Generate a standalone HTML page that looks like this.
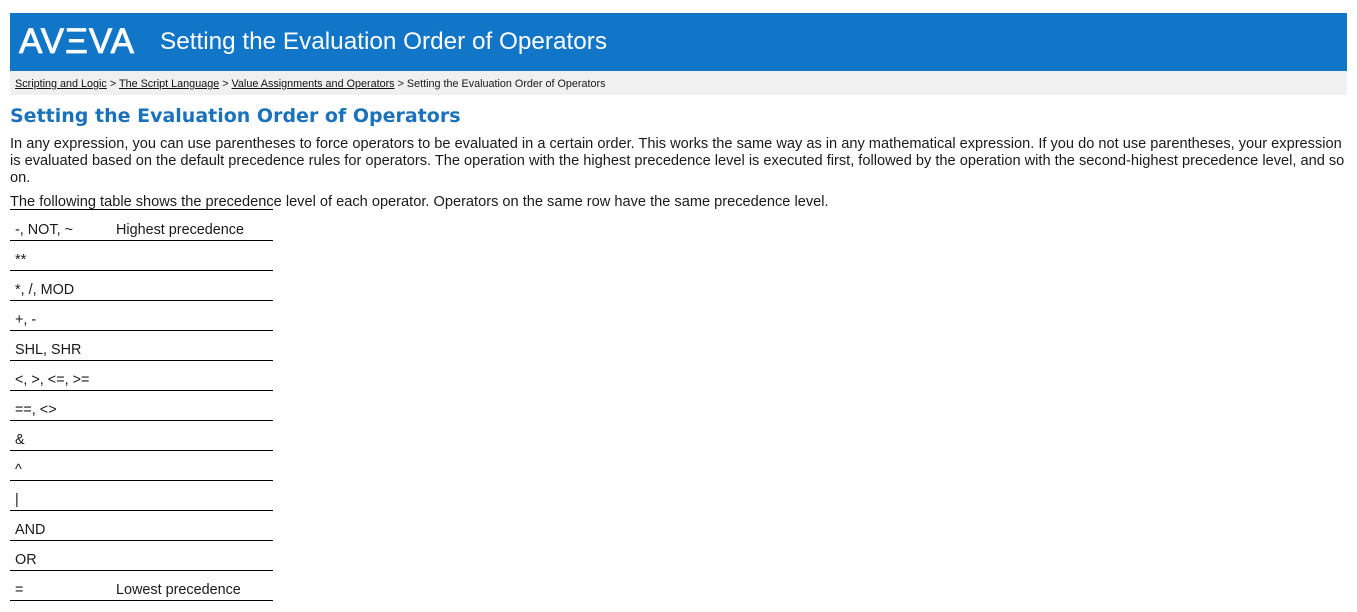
<!DOCTYPE html>
<html><head><meta charset="utf-8"><style>
body{margin:0;background:#fff;font-family:"Liberation Sans",Arial,sans-serif;color:#1a1a1a;}
.hdr{position:absolute;left:10px;top:13px;width:1337px;height:58px;background:#1176c8;color:#fff;}
.logo{position:absolute;left:9px;top:9px;font-size:35px;letter-spacing:1px;font-weight:normal;-webkit-text-stroke:0.8px #fff;}
.ht{position:absolute;left:150px;top:15px;font-size:24.3px;}
.bc{position:absolute;left:10px;top:71px;width:1337px;height:24px;background:#f0f0f0;font-size:10.8px;}
.bc span{position:absolute;left:5px;top:7px;white-space:nowrap}
.bc u{color:#111}
h1{position:absolute;left:10px;top:105px;margin:0;font-family:"DejaVu Sans",Verdana,sans-serif;font-weight:bold;font-size:19px;color:#1a72bd;}
.p{position:absolute;left:10px;top:136px;width:1340px;font-size:14.6px;line-height:17px;}
.p2{position:absolute;left:10px;top:194px;font-size:14.6px;white-space:nowrap}
.tl{position:absolute;left:10px;top:209px;width:263px;border-top:1px solid #000}
.row{position:absolute;left:10px;width:263px;height:29px;border-bottom:1px solid #000;font-size:14.4px;}
.row span{position:absolute;left:5px;top:11px}
.row b{position:absolute;left:106px;top:11px;font-weight:normal}
</style></head><body>
<div class="hdr"><div class="logo">AVΞVA</div><div class="ht">Setting the Evaluation Order of Operators</div></div>
<div class="bc"><span><u>Scripting and Logic</u> &gt; <u>The Script Language</u> &gt; <u>Value Assignments and Operators</u> &gt; Setting the Evaluation Order of Operators</span></div>
<h1>Setting the Evaluation Order of Operators</h1>
<div class="p">In any expression, you can use parentheses to force operators to be evaluated in a certain order. This works the same way as in any mathematical expression. If you do not use parentheses, your expression is evaluated based on the default precedence rules for operators. The operation with the highest precedence level is executed first, followed by the operation with the second-highest precedence level, and so on.</div>
<div class="p2">The following table shows the precedence level of each operator. Operators on the same row have the same precedence level.</div>
<div class="tl"></div>
<div class="row" style="top:211px"><span>-, NOT, ~</span><b>Highest precedence</b></div>
<div class="row" style="top:241px"><span>**</span></div>
<div class="row" style="top:271px"><span>*, /, MOD</span></div>
<div class="row" style="top:301px"><span>+, -</span></div>
<div class="row" style="top:331px"><span>SHL, SHR</span></div>
<div class="row" style="top:361px"><span>&lt;, &gt;, &lt;=, &gt;=</span></div>
<div class="row" style="top:391px"><span>==, &lt;&gt;</span></div>
<div class="row" style="top:421px"><span>&amp;</span></div>
<div class="row" style="top:451px"><span>^</span></div>
<div class="row" style="top:481px"><span>|</span></div>
<div class="row" style="top:511px"><span>AND</span></div>
<div class="row" style="top:541px"><span>OR</span></div>
<div class="row" style="top:571px"><span>=</span><b>Lowest precedence</b></div>
</body></html>
